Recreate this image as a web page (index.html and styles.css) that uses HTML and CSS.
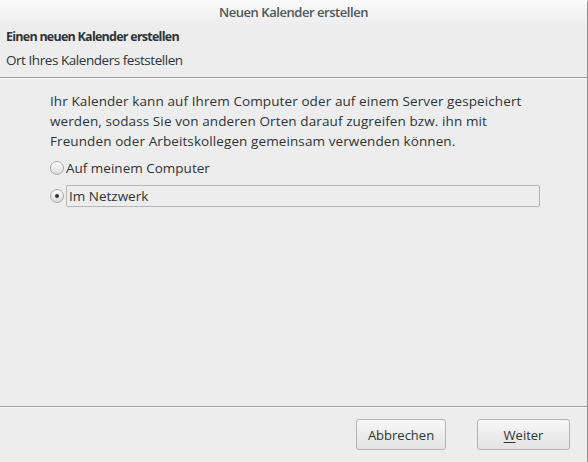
FILE: index.html
```html
<!DOCTYPE html>
<html lang="de">
<head>
<meta charset="utf-8">
<title>Neuen Kalender erstellen</title>
<link rel="stylesheet" href="styles.css">
</head>
<body>
<div class="window">
  <div class="titlebar">Neuen Kalender erstellen</div>
  <div class="header">
    <div class="header-title">Einen neuen Kalender erstellen</div>
    <div class="header-sub">Ort Ihres Kalenders feststellen</div>
  </div>
  <div class="content">
    <p class="intro">Ihr Kalender kann auf Ihrem Computer oder auf einem Server gespeichert<br>werden, sodass Sie von anderen Orten darauf zugreifen bzw. ihn mit<br>Freunden oder Arbeitskollegen gemeinsam verwenden können.</p>
    <div class="option">
      <span class="radio"></span>
      <span class="option-label">Auf meinem Computer</span>
    </div>
    <div class="option">
      <span class="radio checked"></span>
      <span class="option-entry">Im Netzwerk</span>
    </div>
  </div>
  <div class="actions">
    <button class="btn btn-cancel">Abbrechen</button>
    <button class="btn btn-next"><u>W</u>eiter</button>
  </div>
</div>
</body>
</html>
```
FILE: styles.css
```css
html, body {
  margin: 0;
  padding: 0;
  background: #ededed;
}
body {
  font-family: "Open Sans", "DejaVu Sans", sans-serif;
  font-size: 13.5px;
  color: #2e3436;
}
.window {
  width: 587px;
  height: 462px;
  border-right: 1px solid #8f8f8f;
  border-top-right-radius: 3px;
  display: flex;
  flex-direction: column;
  background: #ededed;
}
.titlebar {
  height: 25px;
  line-height: 24px;
  text-align: center;
  font-size: 13px;
  font-weight: 600;
  letter-spacing: -0.45px;
  color: #4e5658;
  background: linear-gradient(#fbfbfb, #ededed);
}
.header {
  padding: 3px 6px 0;
  height: 49px;
  border-bottom: 1px solid #9d9d9d;
  box-shadow: 0 1px 0 #fafafa;
}
.header-title {
  font-size: 12.5px;
  font-weight: 700;
  letter-spacing: -0.75px;
  line-height: 18px;
  height: 22px;
}
.header-sub {
  line-height: 20px;
  letter-spacing: -0.45px;
}
.content {
  flex: 1;
  padding: 13px 0 0 50px;
  border-bottom: 1px solid #9d9d9d;
}
.intro {
  margin: 0;
  line-height: 20px;
  letter-spacing: 0.1px;
  white-space: nowrap;
}
.option {
  display: flex;
  align-items: center;
  margin-top: 6px;
  height: 22px;
}
.option + .option {
  margin-top: 6px;
}
.radio {
  width: 12px;
  height: 12px;
  border-radius: 50%;
  border: 1px solid #a8a8a8;
  background: linear-gradient(#ffffff, #dcdcdc);
  margin-right: 2px;
  position: relative;
  flex: none;
}
.radio.checked::after {
  content: "";
  position: absolute;
  left: 4px;
  top: 4px;
  width: 4px;
  height: 4px;
  border-radius: 50%;
  background: #2e3436;
}
.option-entry {
  width: 470px;
  height: 20px;
  line-height: 20px;
  border: 1px solid #b5b5b5;
  border-radius: 2px;
  padding-left: 2px;
}
.actions {
  height: 55px;
  box-shadow: inset 0 1px 0 #fafafa;
  display: flex;
  justify-content: flex-end;
  align-items: flex-start;
  padding: 12px 17px 0 0;
  box-sizing: border-box;
  gap: 31px;
}
.btn {
  font-family: inherit;
  font-size: 13px;
  color: #2e3436;
  height: 31px;
  border: 1px solid #b3b3b3;
  border-radius: 3px;
  background: linear-gradient(#f7f7f7, #e3e3e3);
  padding: 0;
}
.btn-cancel { width: 90px; }
.btn-next { width: 93px; }
.btn u { text-underline-offset: 2px; }
```
